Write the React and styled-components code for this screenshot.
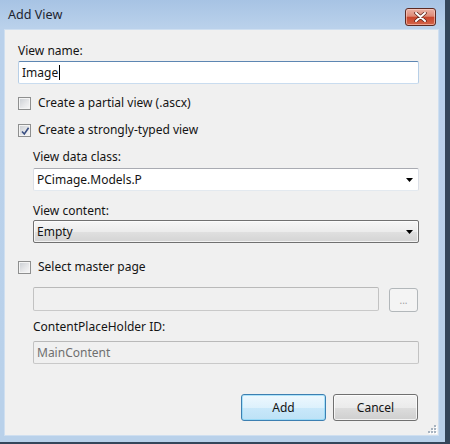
import React from "react";
import styled, { createGlobalStyle } from "styled-components";

const Global = createGlobalStyle`
  html, body { margin: 0; padding: 0; background: #ffffff; }
  body { font-family: "Noto Sans", "Open Sans", sans-serif; font-size: 12px; }
  * { box-sizing: border-box; }
`;

const Window = styled.div`
  width: 450px;
  height: 444px;
  display: flex;
  flex-direction: column;
  background: linear-gradient(180deg, #a7c3e4 0px, #bad1eb 28px, #b9d1ea 100%);
  border-right: 5px solid #34465a;
  border-bottom: 2px solid #34465a;
  padding-bottom: 6px;
`;

const TitleBar = styled.div`
  height: 29px;
  flex: none;
  display: flex;
  justify-content: space-between;
  align-items: flex-start;
  padding: 6px 9px 0 8px;
`;

const Title = styled.span`
  font-size: 12.6px;
  line-height: 17px;
  color: #1e2530;
`;

const CloseButton = styled.div`
  width: 31px;
  height: 18px;
  margin-top: 2px;
  border: 1px solid #5d2a22;
  border-radius: 3px;
  background: linear-gradient(180deg, #eab1a4 0%, #de8a77 45%, #c9452c 52%, #d3654a 100%);
  box-shadow: inset 0 0 0 1px rgba(255, 215, 205, 0.55);
  display: flex;
  align-items: center;
  justify-content: center;
`;

const Client = styled.div`
  position: relative;
  flex: 1;
  margin: 0 6px 0 4px;
  background: #f0f0f0;
  border: 1px solid #cfdff0;
  padding: 13px 19px 0 13px;
  display: flex;
  flex-direction: column;
  color: #141414;
`;

const Label = styled.div`
  height: 16px;
  line-height: 16px;
  margin-top: ${(p) => p.$mt || 0}px;
  white-space: nowrap;
`;

const Indent = styled.div`
  display: flex;
  flex-direction: column;
  margin-left: 15px;
`;

const TextBox = styled.div`
  height: ${(p) => p.$h || 23}px;
  margin-top: ${(p) => p.$mt || 0}px;
  flex: ${(p) => (p.$grow ? 1 : "none")};
  display: flex;
  align-items: center;
  padding-left: 3px;
  background: ${(p) => (p.$disabled ? "#f0f0f0" : "#ffffff")};
  border: 1px solid;
  border-radius: 2px;
  border-color: ${(p) =>
    p.$focused
      ? "#5d86b2 #b7cfe7 #c9dcef #b7cfe7"
      : p.$disabled
      ? "#b9b9b9 #c2c2c2 #c9c9c9 #c2c2c2"
      : "#a9abb2 #dbdfe6 #e3e9ef #dbdfe6"};
  color: ${(p) => (p.$disabled ? "#6f6f6f" : "#141414")};
  white-space: nowrap;
`;

const Caret = styled.span`
  display: inline-block;
  width: 1px;
  height: 15px;
  background: #000;
  margin-left: 1px;
`;

const ComboEdit = styled(TextBox)`
  justify-content: space-between;
  padding-right: 5px;
`;

const ComboList = styled.div`
  height: 23px;
  margin-top: ${(p) => p.$mt || 0}px;
  display: flex;
  align-items: center;
  justify-content: space-between;
  padding: 0 5px 0 3px;
  border: 1px solid #707070;
  border-radius: 2px;
  background: linear-gradient(180deg, #f6f6f6 0%, #ececec 50%, #e0e0e0 51%, #d4d4d4 100%);
  box-shadow: inset 0 0 0 1px rgba(255, 255, 255, 0.7);
`;

const CheckRow = styled.label`
  display: flex;
  align-items: center;
  gap: 7px;
  height: 16px;
  line-height: 16px;
  margin-top: ${(p) => p.$mt || 0}px;
  white-space: nowrap;
`;

const CheckBox = styled.span`
  position: relative;
  width: 13px;
  height: 13px;
  flex: none;
  border: 1px solid #8e8f8f;
  background: linear-gradient(135deg, #c9cdd2 0%, #e6e7e9 55%, #f8f8f8 100%);
  box-shadow: inset 0 0 0 1px #f4f4f4;
`;

const CheckMark = styled.svg`
  position: absolute;
  left: 1px;
  top: 1px;
`;

const BrowseRow = styled.div`
  display: flex;
  align-items: flex-start;
  gap: 10px;
  margin-top: 12px;
  margin-right: 1px;
`;

const SmallButton = styled.div`
  width: 29px;
  height: 24px;
  margin-top: 1px;
  border: 1px solid #b2b7ba;
  border-radius: 3px;
  background: #f4f4f4;
  color: #a0a0a0;
  display: flex;
  align-items: center;
  justify-content: center;
  font-size: 10px;
`;

const ButtonRow = styled.div`
  display: flex;
  justify-content: flex-end;
  gap: 7px;
  margin-top: 30px;
  margin-right: 1px;
`;

const Button = styled.div`
  width: 85px;
  height: 27px;
  border: 1px solid ${(p) => (p.$primary ? "#3c7fb1" : "#707070")};
  border-radius: 3px;
  display: flex;
  align-items: center;
  justify-content: center;
  color: #141414;
  background: ${(p) =>
    p.$primary
      ? "linear-gradient(180deg, #eef8fe 0%, #ddf1fc 50%, #c9e8fa 51%, #bde2f6 100%)"
      : "linear-gradient(180deg, #f3f3f3 0%, #ebebeb 50%, #dddddd 51%, #cfcfcf 100%)"};
  box-shadow: ${(p) =>
    p.$primary
      ? "inset 0 0 0 1px rgba(120, 210, 245, 0.55)"
      : "inset 0 0 0 1px rgba(255, 255, 255, 0.75)"};
`;

const Grip = styled.svg`
  position: absolute;
  right: 1px;
  bottom: 1px;
`;

const Arrow = () => (
  <svg width="7" height="4" viewBox="0 0 7 4">
    <polygon points="0,0 7,0 3.5,4" fill="#000" />
  </svg>
);

const Check = ({ checked }) => (
  <CheckBox>
    {checked && (
      <CheckMark width="11" height="11" viewBox="0 0 11 11">
        <path d="M2 5.5 L4.3 8 L8.6 1.8" fill="none" stroke="#3a4f82" strokeWidth="1.6" />
      </CheckMark>
    )}
  </CheckBox>
);

const CloseGlyph = () => (
  <svg width="13" height="10" viewBox="0 0 13 10">
    <path d="M2 1 L11 9 M11 1 L2 9" stroke="#5a231a" strokeWidth="3.4" strokeLinecap="round" />
    <path d="M2 1 L11 9 M11 1 L2 9" stroke="#ffffff" strokeWidth="2" strokeLinecap="round" />
  </svg>
);

const GripDots = () => {
  const dots = [
    [6, 0], [6, 3], [3, 3], [6, 6], [3, 6], [0, 6],
  ];
  return (
    <Grip width="9" height="9" viewBox="0 0 9 9">
      {dots.map(([x, y]) => (
        <g key={`${x}-${y}`}>
          <rect x={x + 1} y={y + 1} width="2" height="2" fill="#ffffff" />
          <rect x={x} y={y} width="2" height="2" fill="#a7b3c0" />
        </g>
      ))}
    </Grip>
  );
};

export default function App() {
  return (
    <>
      <Global />
      <Window>
        <TitleBar>
          <Title>Add View</Title>
          <CloseButton>
            <CloseGlyph />
          </CloseButton>
        </TitleBar>
        <Client>
          <Label>View name:</Label>
          <TextBox $mt={2} $focused>
            Image
            <Caret />
          </TextBox>

          <CheckRow $mt={11}>
            <Check />
            Create a partial view (.ascx)
          </CheckRow>
          <CheckRow $mt={11}>
            <Check checked />
            Create a strongly-typed view
          </CheckRow>

          <Indent>
            <Label $mt={11}>View data class:</Label>
            <ComboEdit $mt={3}>
              PCimage.Models.P
              <Arrow />
            </ComboEdit>
            <Label $mt={12}>View content:</Label>
            <ComboList $mt={1}>
              Empty
              <Arrow />
            </ComboList>
          </Indent>

          <CheckRow $mt={16}>
            <Check />
            Select master page
          </CheckRow>

          <Indent>
            <BrowseRow>
              <TextBox $h={24} $grow $disabled />
              <SmallButton>...</SmallButton>
            </BrowseRow>
            <Label $mt={7}>ContentPlaceHolder ID:</Label>
            <TextBox $mt={6} $disabled>
              MainContent
            </TextBox>
          </Indent>

          <ButtonRow>
            <Button $primary>Add</Button>
            <Button>Cancel</Button>
          </ButtonRow>
          <GripDots />
        </Client>
      </Window>
    </>
  );
}
